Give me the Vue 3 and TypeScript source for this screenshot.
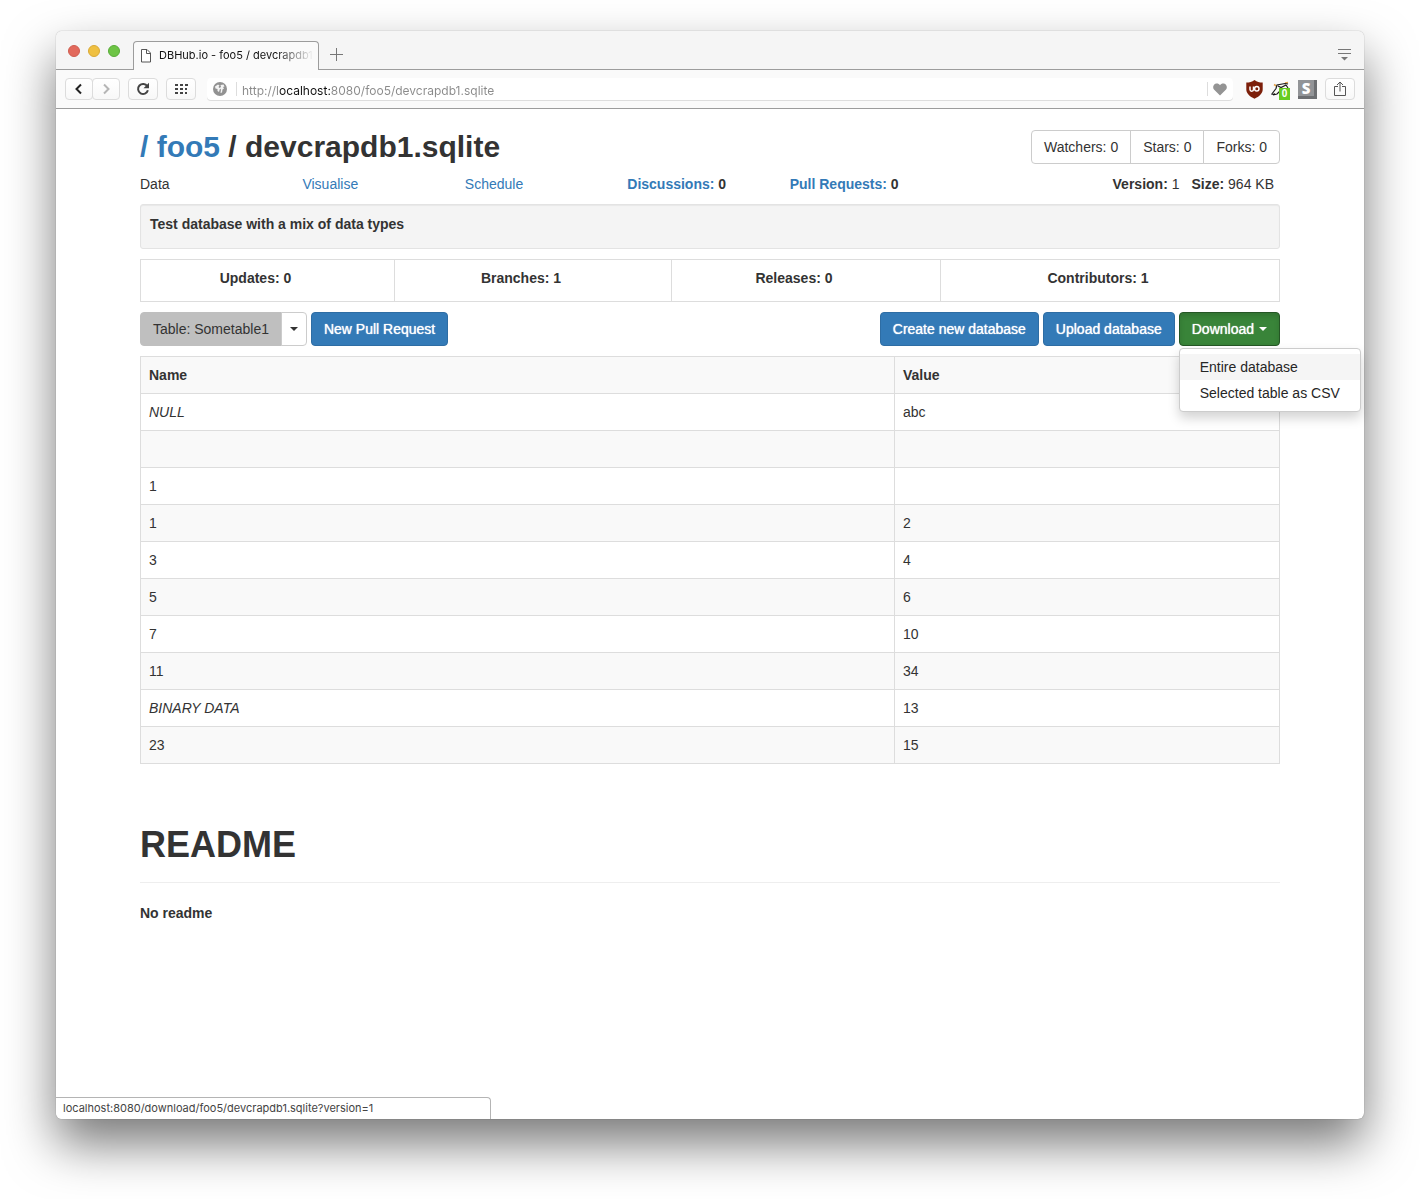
<script setup lang="ts">
import { ref } from 'vue'

interface Cell {
  text: string
  special?: boolean
}

const address = ref('http://localhost:8080/foo5/devcrapdb1.sqlite')
const menuOpen = ref(true)

const socialCounts = ['Watchers: 0', 'Stars: 0', 'Forks: 0']
const stats = ['Updates: 0', 'Branches: 1', 'Releases: 0', 'Contributors: 1']
const downloads = ['Entire database', 'Selected table as CSV']

const rows: Cell[][] = [
  [{ text: 'NULL', special: true }, { text: 'abc' }],
  [{ text: '' }, { text: '' }],
  [{ text: '1' }, { text: '' }],
  [{ text: '1' }, { text: '2' }],
  [{ text: '3' }, { text: '4' }],
  [{ text: '5' }, { text: '6' }],
  [{ text: '7' }, { text: '10' }],
  [{ text: '11' }, { text: '34' }],
  [{ text: 'BINARY DATA', special: true }, { text: '13' }],
  [{ text: '23' }, { text: '15' }],
]
</script>

<template>
  <div class="desktop">
    <div class="window">
      <div class="tab-strip">
        <div class="lights">
          <button class="light red" aria-label="Close"></button>
          <button class="light yellow" aria-label="Minimise"></button>
          <button class="light green" aria-label="Zoom"></button>
        </div>
        <div class="tab">
          <svg width="12" height="15" viewBox="0 0 12 15" fill="#fff" stroke="#555" aria-hidden="true">
            <path d="M1.5 1.5h5.5l3.500 3.500v9h-9z" />
            <path d="M6.500 1.500v4h4" fill="none" />
          </svg>
          <span class="tab-title">DBHub.io - foo5 / devcrapdb1</span>
        </div>
        <button class="plain new-tab" aria-label="New tab">
          <svg width="13" height="13" viewBox="0 0 13 13" stroke="#777"><path d="M6.500 0v13M0 6.500h13" /></svg>
        </button>
        <button class="plain tab-menu" aria-label="Tab menu">
          <svg width="13" height="13" viewBox="0 0 13 13"><path d="M0 1.500h13M0 5.500h13" stroke="#777" /><path d="M3 9h7l-3.500 3.500z" fill="#777" /></svg>
        </button>
      </div>

      <div class="browser-bar">
        <div class="history">
          <button class="chrome-btn" aria-label="Back">
            <svg width="10" height="12" viewBox="0 0 10 12" fill="none" stroke="#222" stroke-width="2"><path d="M7 1.500L2.500 6 7 10.500" /></svg>
          </button>
          <button class="chrome-btn" aria-label="Forward">
            <svg width="10" height="12" viewBox="0 0 10 12" fill="none" stroke="#b5b5b5" stroke-width="2"><path d="M3 1.500L7.500 6 3 10.500" /></svg>
          </button>
        </div>
        <button class="chrome-btn wide" aria-label="Reload">
          <svg width="14" height="14" viewBox="0 0 14 14"><path d="M11.300 4.300A5 5 0 1 0 11.900 8.300" fill="none" stroke="#444" stroke-width="2" /><path d="M13 0.800v5.500H7.500z" fill="#444" /></svg>
        </button>
        <button class="chrome-btn wide" aria-label="Speed dial">
          <svg width="13" height="11" viewBox="0 0 13 11" fill="#444"><path d="M0 0h3v2H0zM5 0h3v2H5zM10 0h3v2h-3zM0 4h3v2H0zM5 4h3v2H5zM10 4h2v2h-2zM0 8h3v2H0zM5 8h3v2H5zM10 8h2v2h-2z" /></svg>
        </button>
        <div class="address">
          <svg width="14" height="14" viewBox="0 0 14 14" aria-hidden="true"><circle cx="7" cy="7" r="7" fill="#929292" /><path d="M2 4.500l3-2 1.500 1-1 1.500 1.500 1.500-1 3.500-1.500-1L4.500 7 2.500 6.500zM7.500 3l3-.500 1 2-1.500.5 1 1.500-1.500 1-.5 3-1.500.5.5-3.500L6.500 6l1.500-1z" fill="#f4f4f4" /></svg>
          <i class="rule"></i>
          <input v-model="address" type="text" aria-label="Address" spellcheck="false" />
          <i class="rule"></i>
          <button class="plain" aria-label="Bookmark">
            <svg width="14" height="13" viewBox="0 0 14 13"><path d="M7 12.500L1.200 6.800C-.5 5 0 2 2 .9 4 0 6 .6 7 2.300 8 .6 10 0 12 .9c2 1.100 2.500 4.100.8 5.900z" fill="#949494" /></svg>
          </button>
        </div>
        <div class="extensions">
          <button class="plain" aria-label="Ad blocker">
            <svg width="17" height="19" viewBox="0 0 17 19"><path d="M8.500 0c2.500 1.800 5 2.500 8.200 2.600v7c0 4-3.500 7-8.200 9.200C3.800 16.600.3 13.600.3 9.600v-7C3.500 2.500 6 1.800 8.500 0z" fill="#7c1f0a" /><path d="M4 6.500v3c0 2.200 3.500 2.200 3.500 0v-3" fill="none" stroke="#fff" stroke-width="1.500" /><ellipse cx="10.800" cy="8.700" rx="2.200" ry="2.300" fill="none" stroke="#fff" stroke-width="1.500" /></svg>
          </button>
          <button class="plain badger" aria-label="Privacy Badger">
            <svg width="19" height="17" viewBox="0 0 19 17">
              <path d="M.5 14L4.500 8 6 4.500 14 2l4 3-1 4-7 5-5 1z" fill="#fbfaf6" />
              <path d="M5.500 5L3 3.500M14 2l3-.500" stroke="#e3a34a" stroke-width="1.500" />
              <path d="M.5 13.500L5 7.500 6 4l8-1.500 3 .5M7 5l3 1.500 5-2.500M2 14l4-1 4-4M15 4l2 3" fill="none" stroke="#1c1c1c" stroke-width="1.200" />
              <path d="M.5 14l3-2 1 2z" fill="#111" />
            </svg>
            <span class="count">0</span>
          </button>
          <button class="plain stylish" aria-label="Stylish"><span>S</span></button>
        </div>
        <button class="chrome-btn wide" aria-label="Share">
          <svg width="12" height="16" viewBox="0 0 12 16" fill="none" stroke="#555"><path d="M4 5.500H.5v9h11v-9H8M6 10.500V1M3 4l3-3 3 3" /></svg>
        </button>
      </div>

      <main class="page">
        <div class="container">
          <header class="heading">
            <h1><a href="#">/ </a><a href="#">foo5</a> / devcrapdb1.sqlite</h1>
            <div class="group">
              <button v-for="c in socialCounts" :key="c" class="btn">{{ c }}</button>
            </div>
          </header>

          <nav class="sections">
            <span>Data</span>
            <a href="#">Visualise</a>
            <a href="#">Schedule</a>
            <span><b><a href="#">Discussions:</a> 0</b></span>
            <span><b><a href="#">Pull Requests:</a> 0</b></span>
            <div class="facts">
              <span><b>Version:</b> 1</span>
              <span><b>Size:</b> 964 KB</span>
            </div>
          </nav>

          <p class="well">Test database with a mix of data types</p>

          <div class="stats">
            <div v-for="s in stats" :key="s">{{ s }}</div>
          </div>

          <div class="actions">
            <div class="group">
              <button class="btn current">Table: Sometable1</button>
              <button class="btn toggle" aria-label="Choose table"><i class="caret"></i></button>
            </div>
            <button class="btn primary">New Pull Request</button>
            <button class="btn primary push">Create new database</button>
            <button class="btn primary">Upload database</button>
            <div class="dropdown">
              <button class="btn success" @click="menuOpen = !menuOpen">Download <i class="caret"></i></button>
              <ul v-if="menuOpen" class="menu">
                <li v-for="(d, i) in downloads" :key="d">
                  <a href="#" :class="{ hovered: i === 0 }">{{ d }}</a>
                </li>
              </ul>
            </div>
          </div>

          <table class="data">
            <thead>
              <tr><th scope="col">Name</th><th scope="col">Value</th></tr>
            </thead>
            <tbody>
              <tr v-for="(row, r) in rows" :key="r">
                <td v-for="(cell, c) in row" :key="c">
                  <em v-if="cell.special">{{ cell.text }}</em>
                  <template v-else>{{ cell.text }}</template>
                </td>
              </tr>
            </tbody>
          </table>

          <section class="readme">
            <h2>README</h2>
            <p>No readme</p>
          </section>
        </div>
      </main>

      <div class="status">localhost:8080/download/foo5/devcrapdb1.sqlite?version=1</div>
    </div>
  </div>
</template>

<style>
body {
  margin: 0;
  background: #fff;
}
</style>

<style scoped>
* {
  box-sizing: border-box;
}
.desktop {
  display: flex;
  min-height: 100vh;
  padding: 31px 56px 80px;
  overflow: hidden;
  font: 14px/20px "Liberation Sans", Arial, sans-serif;
  color: #333;
}
.window {
  position: relative;
  display: flex;
  flex: 1;
  flex-direction: column;
  min-width: 0;
  background: #fff;
  border-radius: 6px;
  box-shadow: 0 0 1px rgba(0, 0, 0, 0.5), 0 25px 50px rgba(0, 0, 0, 0.53);
}
button,
input {
  margin: 0;
  font: inherit;
}
svg {
  display: block;
}
.plain {
  display: flex;
  padding: 0;
  background: none;
  border: 0;
}

/* browser chrome */
.tab-strip {
  display: flex;
  align-items: flex-end;
  height: 39px;
  padding: 0 13px 0 12px;
  background: #f5f5f5;
  border-bottom: 1px solid #9c9c9c;
  border-radius: 6px 6px 0 0;
}
.lights {
  display: flex;
  gap: 8px;
  width: 65px;
  padding-bottom: 12px;
}
.light {
  width: 12px;
  height: 12px;
  padding: 0;
  border: 1px solid;
  border-radius: 50%;
}
.red {
  background: #e2695c;
  border-color: #cf5d50;
}
.yellow {
  background: #efc041;
  border-color: #d9a935;
}
.green {
  background: #6dc445;
  border-color: #58ac38;
}
.tab {
  display: flex;
  align-items: center;
  gap: 7px;
  width: 186px;
  height: 29px;
  margin-bottom: -1px;
  padding: 0 4px 2px 6px;
  background: #fafafa;
  border: 1px solid #9c9c9c;
  border-bottom: 0;
  border-radius: 4px 4px 0 0;
}
.tab-title {
  flex: 1;
  overflow: hidden;
  font: 11px/16px Inter, sans-serif;
  color: #111;
  white-space: nowrap;
  mask-image: linear-gradient(90deg, #000 75%, transparent);
}
.new-tab {
  margin: 0 auto 8px 11px;
}
.tab-menu {
  margin-bottom: 8px;
}
.browser-bar {
  display: flex;
  align-items: center;
  gap: 8px;
  height: 39px;
  padding: 0 9px;
  background: #fafafa;
  border-bottom: 1px solid #9c9c9c;
}
.history {
  display: flex;
}
.chrome-btn {
  display: flex;
  align-items: center;
  justify-content: center;
  width: 28px;
  height: 22px;
  padding: 0;
  background: linear-gradient(#fff, #f8f8f8);
  border: 1px solid #dcdcdc;
  border-radius: 4px;
}
.chrome-btn + .chrome-btn:not(.wide) {
  margin-left: -1px;
}
.wide {
  width: 30px;
}
.address {
  display: flex;
  flex: 1;
  align-items: center;
  gap: 5px;
  height: 22px;
  margin: 0 5px 0 3px;
  padding: 0 6px;
  background: #fff;
  border-radius: 4px;
  box-shadow: 0 1px 0 #ddd;
}
.rule {
  width: 1px;
  height: 14px;
  margin-left: 4px;
  background: #ddd;
}
.address input {
  flex: 1;
  min-width: 0;
  height: 22px;
  padding: 2px 0 0;
  border: 0;
  outline: 0;
  font: 12px/20px Inter, sans-serif;
  color: transparent;
  background: linear-gradient(90deg, #8a8a8a 36px, #111 36px, #111 88px, #8a8a8a 88px);
  background-clip: text;
}
.extensions {
  display: flex;
  align-items: center;
  gap: 8px;
}
.badger {
  position: relative;
}
.count {
  position: absolute;
  right: 0;
  bottom: -2px;
  width: 11px;
  height: 12px;
  font: bold 10px/12px "Liberation Sans", Arial, sans-serif;
  color: #fff;
  text-align: center;
  background: #6c2;
}
.stylish {
  width: 19px;
  height: 19px;
  background: #929497;
  border: solid #6d6f72;
  border-width: 0 3px 3px 0;
}
.stylish span {
  flex: 1;
  font: 800 15px/16px "Open Sans", sans-serif;
  color: #fff;
  text-align: center;
}
.status {
  position: absolute;
  bottom: 0;
  left: 0;
  width: 435px;
  height: 22px;
  padding: 0 7px;
  font: 11px/21px Inter, sans-serif;
  color: #444;
  background: #fff;
  border: solid #b4b4b4;
  border-width: 1px 1px 0 0;
  border-radius: 0 4px 0 6px;
}

/* page */
.page {
  flex: 1;
  padding: 21px 24px 60px;
}
.container {
  display: flex;
  flex-direction: column;
  gap: 10px;
  max-width: 1140px;
  margin: 0 auto;
}
a {
  color: #337ab7;
  text-decoration: none;
}
h1,
h2,
p {
  margin: 0;
}
.heading {
  display: flex;
  align-items: center;
  justify-content: space-between;
}
h1 {
  font-size: 30px;
  line-height: 34px;
}
.group {
  display: flex;
}
.btn {
  display: flex;
  align-items: center;
  gap: 5px;
  padding: 6px 12px;
  line-height: 20px;
  color: #333;
  white-space: nowrap;
  background: #fff;
  border: 1px solid #ccc;
  border-radius: 4px;
}
.group .btn:not(:first-child) {
  margin-left: -1px;
  border-top-left-radius: 0;
  border-bottom-left-radius: 0;
}
.group .btn:not(:last-child) {
  border-top-right-radius: 0;
  border-bottom-right-radius: 0;
}
.sections {
  display: grid;
  grid-template-columns: repeat(7, 1fr);
  padding-right: 3px;
}
.facts {
  display: flex;
  grid-column: 6 / 8;
  gap: 12px;
  justify-content: flex-end;
  padding-right: 3px;
}
.well {
  padding: 9px 9px 14px;
  font-weight: bold;
  background: #f4f4f4;
  border: 1px solid #e3e3e3;
  border-radius: 3px;
  box-shadow: inset 0 1px 1px rgba(0, 0, 0, 0.05);
}
.stats {
  display: grid;
  grid-template-columns: 253fr 277fr 269fr 339fr;
  font-weight: bold;
  text-align: center;
  border: 1px solid #ddd;
}
.stats div {
  padding: 8px 24px 13px 0;
}
.stats div + div {
  border-left: 1px solid #ddd;
}
.actions {
  display: flex;
  gap: 4px;
}
.btn.current {
  background: #bfbfbf;
  border-color: #bfbfbf;
}
.btn.toggle {
  padding: 6px 8px;
}
.btn.primary,
.btn.success {
  color: #fff;
  text-shadow: 0 0 1px #fff;
  background: #337ab7;
  border-color: #2e6da4;
}
.btn.success {
  background: #398439;
  border-color: #255625;
  box-shadow: inset 0 3px 5px rgba(0, 0, 0, 0.125);
}
.push {
  margin-left: auto;
}
.caret {
  width: 0;
  height: 0;
  border: solid transparent;
  border-width: 4px 4px 0;
  border-top-color: currentColor;
}
.dropdown {
  position: relative;
}
.menu {
  position: absolute;
  top: 36px;
  left: 0;
  z-index: 1;
  margin: 0;
  padding: 5px 0;
  list-style: none;
  background: #fff;
  border: 1px solid #ccc;
  border-radius: 4px;
  box-shadow: 0 6px 12px rgba(0, 0, 0, 0.175);
}
.menu a {
  display: block;
  padding: 3px 20px;
  color: #262626;
  white-space: nowrap;
}
.menu .hovered {
  background: #f5f5f5;
}
.data {
  width: 100%;
  table-layout: fixed;
  border-collapse: collapse;
}
.data th,
.data td {
  height: 37px;
  padding: 8px;
  text-align: left;
  border: 1px solid #ddd;
}
.data th:first-child {
  width: 66.2%;
}
.data thead tr,
.data tbody tr:nth-child(even) {
  background: #f9f9f9;
}
.readme {
  padding-top: 51px;
  font-weight: bold;
}
h2 {
  padding-bottom: 17px;
  margin-bottom: 20px;
  font-size: 36px;
  line-height: 40px;
  border-bottom: 1px solid #eee;
}
</style>
